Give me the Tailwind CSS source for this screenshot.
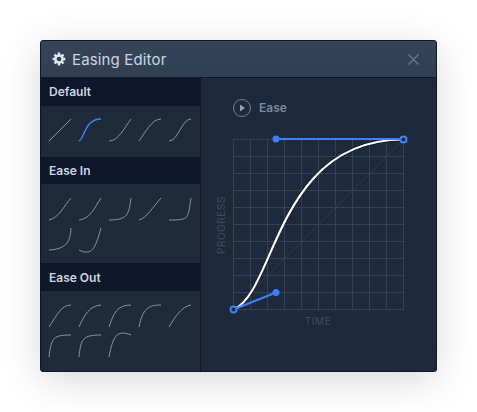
<!DOCTYPE html>
<html>
<head>
<meta charset="utf-8">
<script src="https://cdn.jsdelivr.net/npm/@tailwindcss/browser@4"></script>
</head>
<body class="bg-white w-[477px] h-[412px] overflow-hidden font-['Inter',sans-serif]">
<div class="pt-10 pl-10">
  <div class="w-[397px] h-[332px] flex flex-col bg-[#1e293b] border border-[#0f172a] rounded-[3px] shadow-[0_8px_40px_rgba(0,0,0,0.16)] overflow-hidden">
    <header class="h-[37px] shrink-0 flex items-center pl-[11px] pr-[17px] bg-gradient-to-b from-[#364559] to-[#303f54] border-b border-[#0f172a]">
      <svg class="w-[14px] h-[14px] mr-[6px]" viewBox="0 0 16 16" fill="none" stroke="#e2e8f0"><circle cx="8" cy="8" r="4.1" stroke-width="2.8"/><path stroke-width="2.8" d="M8 .7v2.5M8 12.8v2.5M.7 8h2.5M12.8 8h2.5M2.85 2.85l1.8 1.8M11.35 11.35l1.8 1.8M2.85 13.15l1.8-1.8M11.35 4.65l1.8-1.8"/></svg>
      <span class="text-[15px] leading-none tracking-[0.15px] text-[#cbd5e1]">Easing Editor</span>
      <svg class="ml-auto w-[11px] h-[11px]" viewBox="0 0 11 11" fill="none" stroke="#64748b" stroke-width="1.5"><path d="M.5.5l10 10M10.5.5l-10 10"/></svg>
    </header>
    <div class="flex-1 flex min-h-0">
      <aside class="w-[160px] shrink-0 border-r border-[#0f172a] bg-[#1f2a3b] flex flex-col">
        <section>
          <h2 class="h-[28px] flex items-center pl-2 bg-[#0f172a] text-xs font-semibold text-[#cbd5e1]">Default</h2>
          <div class="h-[52px] pl-2 pt-[13px] grid grid-cols-[repeat(5,30px)] auto-rows-[30px] content-start border-b border-[#0f172a]">
            <svg class="w-[22px] h-[22px] overflow-visible" viewBox="0 0 100 100" fill="none" stroke="#8794a7"><path vector-effect="non-scaling-stroke" d="M0 100L100 0"/></svg>
            <svg class="w-[22px] h-[22px] overflow-visible" viewBox="0 0 100 100" fill="none" stroke="#3b82f6"><path vector-effect="non-scaling-stroke" stroke-width="1.4" d="M0 100C25 90 25 0 100 0"/></svg>
            <svg class="w-[22px] h-[22px] overflow-visible" viewBox="0 0 100 100" fill="none" stroke="#8794a7"><path vector-effect="non-scaling-stroke" d="M0 100C42 100 70 40 100 0"/></svg>
            <svg class="w-[22px] h-[22px] overflow-visible" viewBox="0 0 100 100" fill="none" stroke="#8794a7"><path vector-effect="non-scaling-stroke" d="M0 100C30 60 58 0 100 0"/></svg>
            <svg class="w-[22px] h-[22px] overflow-visible" viewBox="0 0 100 100" fill="none" stroke="#8794a7"><path vector-effect="non-scaling-stroke" d="M0 100C42 100 58 0 100 0"/></svg>
          </div>
        </section>
        <section>
          <h2 class="h-[26px] flex items-center pl-2 bg-[#0f172a] text-xs font-semibold text-[#cbd5e1]">Ease In</h2>
          <div class="h-[80px] pl-2 pt-[14px] grid grid-cols-[repeat(5,30px)] auto-rows-[30px] content-start border-b border-[#0f172a]">
            <svg class="w-[22px] h-[22px] overflow-visible" viewBox="0 0 100 100" fill="none" stroke="#8794a7"><path vector-effect="non-scaling-stroke" d="M0 100C47 88 65 40 100 0"/></svg>
            <svg class="w-[22px] h-[22px] overflow-visible" viewBox="0 0 100 100" fill="none" stroke="#8794a7"><path vector-effect="non-scaling-stroke" d="M0 100C55 92 68 47 100 0"/></svg>
            <svg class="w-[22px] h-[22px] overflow-visible" viewBox="0 0 100 100" fill="none" stroke="#8794a7"><path vector-effect="non-scaling-stroke" d="M0 100C85 100 90 75 100 0"/></svg>
            <svg class="w-[22px] h-[22px] overflow-visible" viewBox="0 0 100 100" fill="none" stroke="#8794a7"><path vector-effect="non-scaling-stroke" d="M0 100C35 90 60 45 100 0"/></svg>
            <svg class="w-[22px] h-[22px] overflow-visible" viewBox="0 0 100 100" fill="none" stroke="#8794a7"><path vector-effect="non-scaling-stroke" d="M0 100C95 100 85 95 100 0"/></svg>
            <svg class="w-[22px] h-[22px] overflow-visible" viewBox="0 0 100 100" fill="none" stroke="#8794a7"><path vector-effect="non-scaling-stroke" d="M0 100C70 96 98 70 100 0"/></svg>
            <svg class="w-[22px] h-[22px] overflow-visible" viewBox="0 0 100 100" fill="none" stroke="#8794a7"><path vector-effect="non-scaling-stroke" d="M0 100C60 128 73 95 100 0"/></svg>
          </div>
        </section>
        <section class="flex-1">
          <h2 class="h-[27px] flex items-center pl-2 bg-[#0f172a] text-xs font-semibold text-[#cbd5e1]">Ease Out</h2>
          <div class="pl-2 pt-[14px] grid grid-cols-[repeat(5,30px)] auto-rows-[30px] content-start">
            <svg class="w-[22px] h-[22px] overflow-visible" viewBox="0 0 100 100" fill="none" stroke="#8794a7"><path vector-effect="non-scaling-stroke" d="M0 100C39 42 56 0 100 0"/></svg>
            <svg class="w-[22px] h-[22px] overflow-visible" viewBox="0 0 100 100" fill="none" stroke="#8794a7"><path vector-effect="non-scaling-stroke" d="M0 100C25 45 45 6 100 0"/></svg>
            <svg class="w-[22px] h-[22px] overflow-visible" viewBox="0 0 100 100" fill="none" stroke="#8794a7"><path vector-effect="non-scaling-stroke" d="M0 100C21 39 35 0 100 0"/></svg>
            <svg class="w-[22px] h-[22px] overflow-visible" viewBox="0 0 100 100" fill="none" stroke="#8794a7"><path vector-effect="non-scaling-stroke" d="M0 100C16 16 44 0 100 0"/></svg>
            <svg class="w-[22px] h-[22px] overflow-visible" viewBox="0 0 100 100" fill="none" stroke="#8794a7"><path vector-effect="non-scaling-stroke" d="M0 100C30 50 60 5 100 0"/></svg>
            <svg class="w-[22px] h-[22px] overflow-visible" viewBox="0 0 100 100" fill="none" stroke="#8794a7"><path vector-effect="non-scaling-stroke" d="M0 100C10 10 22 0 100 0"/></svg>
            <svg class="w-[22px] h-[22px] overflow-visible" viewBox="0 0 100 100" fill="none" stroke="#8794a7"><path vector-effect="non-scaling-stroke" d="M0 100C8 18 16 0 100 0"/></svg>
            <svg class="w-[22px] h-[22px] overflow-visible" viewBox="0 0 100 100" fill="none" stroke="#8794a7"><path vector-effect="non-scaling-stroke" d="M0 100C17 12 32 -28 100 0"/></svg>
          </div>
        </section>
      </aside>
      <main class="flex-1 min-w-0 pl-[32px] pt-[21px]">
        <div class="h-[18px] flex items-center gap-2 mb-[13px]">
          <svg class="w-[18px] h-[18px]" viewBox="0 0 18 18" fill="none"><circle cx="9" cy="9" r="8.5" stroke="#718096"/><path fill="#94a3b8" d="M7 5.5v7l5-3.5z"/></svg>
          <span class="text-xs font-semibold text-[#7c8aa0]">Ease</span>
        </div>
        <div class="-ml-[28px]">
          <svg class="block w-[210px] h-[200px] overflow-visible" viewBox="0 0 210 200" fill="none">
            <path stroke="#334155" d="M28.5 9v170M45.5 9v170M62.5 9v170M79.5 9v170M96.5 9v170M113.5 9v170M130.5 9v170M147.5 9v170M164.5 9v170M181.5 9v170M198.5 9v170M28 9.5h171M28 26.5h171M28 43.5h171M28 60.5h171M28 77.5h171M28 94.5h171M28 111.5h171M28 128.5h171M28 145.5h171M28 162.5h171M28 179.5h171"/>
            <path stroke="#2e3b4e" d="M28.5 179.5L198.5 9.5"/>
            <text x="0" y="0" transform="translate(19.5 95) rotate(-90)" text-anchor="middle" font-size="10" letter-spacing="0.6" fill="#3f4d61">PROGRESS</text>
            <text x="113" y="195" text-anchor="middle" font-size="10" letter-spacing="0.6" fill="#3f4d61">TIME</text>
            <path stroke="#0f172a" stroke-width="3.4" d="M28.5 179.5C71 162 71 9.5 198.5 9.5"/>
            <path stroke="#ffffff" stroke-width="2.2" d="M28.5 179.5C71 162 71 9.5 198.5 9.5"/>
            <path stroke="#3b82f6" stroke-width="2" d="M71 9H198.5M28.5 179.5L71 162.5"/>
            <circle cx="71" cy="9" r="3.5" fill="#3b82f6"/>
            <circle cx="71" cy="162.5" r="3.5" fill="#3b82f6"/>
            <circle cx="28.5" cy="179.5" r="3" fill="#1e293b" stroke="#3b82f6" stroke-width="2"/>
            <circle cx="198.5" cy="9.5" r="3" fill="#1e293b" stroke="#3b82f6" stroke-width="2"/>
          </svg>
        </div>
      </main>
    </div>
  </div>
</div>
</body>
</html>
